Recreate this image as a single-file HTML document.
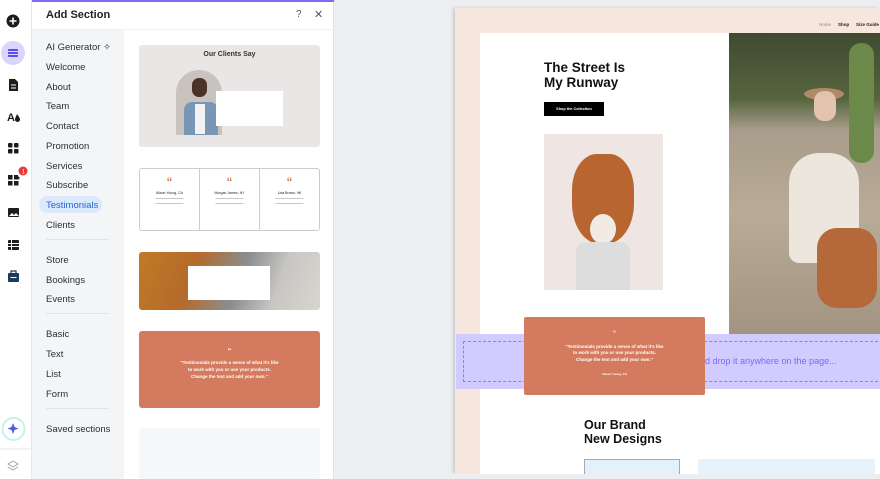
<!DOCTYPE html>
<html><head><meta charset="utf-8"><style>
*{box-sizing:border-box;margin:0;padding:0}
body{width:880px;height:479px;overflow:hidden;font-family:"Liberation Sans",sans-serif;background:#eceef1;position:relative}
.abs{position:absolute}
.rail{left:0;top:0;width:32px;height:479px;background:#fff;border-right:1px solid #e5e7eb}
.panel{left:32px;top:0;width:302px;height:479px;background:#fff;border-right:1px solid #dfe2e6}
.menu{left:32px;top:30px;width:92px;height:449px;background:#f4f5f7}
.mi{position:absolute;left:46px;font-size:9.5px;color:#2b2f36}
.sep{position:absolute;left:46px;width:63px;height:1px;background:#e1e3e7}
.card{position:absolute;left:139px;width:181px;border-radius:3px}
.col{flex:1;text-align:center;color:#d47a5e;font-size:12px;padding-top:6px;font-weight:bold}
.col i{display:block;font-style:normal;color:#222;font-size:3.5px;line-height:5px;font-weight:normal;margin-top:2px}
</style></head><body>
<div class="abs rail"></div>
<svg class="abs" style="left:0;top:0" width="32" height="479">
<circle cx="13" cy="21" r="6.5" fill="#1b1d21"/><path d="M13 17.5v7M9.5 21h7" stroke="#fff" stroke-width="1.6"/>
<circle cx="13" cy="53" r="12" fill="#d9d5fb"/><rect x="8" y="49" width="10" height="8" rx="1" fill="#5b4cf0"/><path d="M8 51.5h10M8 54.5h10" stroke="#d9d5fb" stroke-width="1"/>
<path d="M9 79h6l3 3v9H9z" fill="#1b1d21"/><path d="M11 85h5M11 88h5" stroke="#fff" stroke-width="1"/>
<text x="7" y="121" font-size="11" font-weight="bold" font-family="Liberation Sans" fill="#1b1d21">A</text><path d="M17 114c2 3 3 4 3 5.5a2.5 2.5 0 0 1-5 0c0-1.5 1-2.5 2-5.5z" fill="#1b1d21"/>
<rect x="8" y="143" width="4.5" height="4.5" rx="1" fill="#1b1d21"/><rect x="14" y="143" width="4.5" height="4.5" rx="1" fill="#1b1d21"/><rect x="8" y="149" width="4.5" height="4.5" rx="1" fill="#1b1d21"/><rect x="14" y="149" width="4.5" height="4.5" rx="1" fill="#1b1d21"/>
<rect x="8" y="175" width="4.5" height="4.5" fill="#1b1d21"/><rect x="8" y="181" width="4.5" height="4.5" fill="#1b1d21"/><rect x="14" y="181" width="4.5" height="4.5" fill="#1b1d21"/><path d="M14 175h4v1.5a1.5 1.5 0 0 1 0 3v0h-4z" fill="#1b1d21"/>
<circle cx="23" cy="171" r="4.5" fill="#e53935"/><text x="21.6" y="173.5" font-size="6" fill="#fff" font-family="Liberation Sans">1</text>
<rect x="8" y="208" width="11" height="9" rx="1" fill="#1b1d21"/><path d="M9 216l3-3 2 2 2-2 3 3z" fill="#fff"/>
<rect x="8" y="240" width="11" height="10" rx="1" fill="#1b1d21"/><path d="M8 243.5h11M8 246.5h11M11.5 240v10" stroke="#fff" stroke-width="1"/>
<rect x="8" y="273" width="11" height="9" rx="1" fill="#1b3a5c"/><path d="M11 273v-2h5v2" stroke="#1b3a5c" stroke-width="1.2" fill="none"/><path d="M10.5 277.5h6" stroke="#fff" stroke-width="1"/>
<circle cx="13.5" cy="429" r="11" fill="#fff" stroke="#c8f0ea" stroke-width="2"/><path d="M13 423l1.5 4 4 1.5-4 1.5-1.5 4-1.5-4-4-1.5 4-1.5z" fill="#4b5bf0"/>
<path d="M0 449h32" stroke="#e5e7eb"/>
<path d="M8 464l5-3 5 3-5 3zM8 467l5 3 5-3" stroke="#9aa0a8" stroke-width="0.9" fill="none"/>
</svg>

<div class="abs panel"></div>
<div class="abs" style="left:32px;top:0;width:302px;height:2px;background:#7b6cf6"></div>
<div class="abs" style="left:46px;top:9px;font-size:11px;font-weight:bold;color:#20232a">Add Section</div>
<div class="abs" style="left:296px;top:9px;font-size:10px;color:#555">?</div>
<div class="abs" style="left:314px;top:8px;font-size:11px;color:#555">✕</div>
<div class="abs" style="left:32px;top:29px;width:302px;height:1px;background:#eef0f2"></div>
<div class="abs menu"></div>
<div class="mi" style="top:42px">AI Generator ✧</div>
<div class="mi" style="top:62px">Welcome</div>
<div class="mi" style="top:82px">About</div>
<div class="mi" style="top:101px">Team</div>
<div class="mi" style="top:121px">Contact</div>
<div class="mi" style="top:141px">Promotion</div>
<div class="mi" style="top:161px">Services</div>
<div class="mi" style="top:180px">Subscribe</div>
<div class="abs" style="left:39px;top:196px;width:63px;height:17px;border-radius:9px;background:#dbe9fd"></div>
<div class="mi" style="top:200px;color:#2a63d9">Testimonials</div>
<div class="mi" style="top:220px">Clients</div>
<div class="sep" style="top:239px"></div>
<div class="mi" style="top:255px">Store</div>
<div class="mi" style="top:275px">Bookings</div>
<div class="mi" style="top:294px">Events</div>
<div class="sep" style="top:313px"></div>
<div class="mi" style="top:329px">Basic</div>
<div class="mi" style="top:349px">Text</div>
<div class="mi" style="top:369px">List</div>
<div class="mi" style="top:389px">Form</div>
<div class="sep" style="top:408px"></div>
<div class="mi" style="top:424px">Saved sections</div>

<div class="card" style="top:45px;height:102px;background:#e9e6e5">
  <div class="abs" style="left:0;width:181px;top:6px;text-align:center;font-size:7px;font-weight:bold;color:#333">Our Clients Say</div>
  <div class="abs" style="left:37px;top:25px;width:46px;height:65px;border-radius:23px 23px 0 0;background:#c9c3bf;overflow:hidden">
    <div class="abs" style="left:8px;top:32px;width:34px;height:40px;background:#7896b5;border-radius:8px 8px 0 0"></div>
    <div class="abs" style="left:19px;top:34px;width:10px;height:30px;background:#f2f2f2"></div>
    <div class="abs" style="left:16px;top:8px;width:15px;height:19px;background:#4a3226;border-radius:7px"></div>
  </div>
  <div class="abs" style="left:77px;top:46px;width:67px;height:35px;background:#fff"></div>
</div>
<div class="card" style="top:168px;height:63px;background:#fff;border:1px solid #ccc;display:flex">
  <div class="col" style="border-right:1px solid #ccc">“<i>Alison Young, CA<br>————————<br>————————</i></div>
  <div class="col" style="border-right:1px solid #ccc">“<i>Morgan James, NY<br>————————<br>————————</i></div>
  <div class="col">“<i>Lisa Brown, WI<br>————————<br>————————</i></div>
</div>
<div class="card" style="top:252px;height:58px;background:linear-gradient(110deg,#c07a25 0%,#b56a2a 30%,#8b8d8f 55%,#c8c6c2 75%,#d9d6d1 100%);overflow:hidden">
  <div class="abs" style="left:49px;top:14px;width:82px;height:34px;background:#fff"></div>
</div>
<div class="card" style="top:331px;height:77px;background:#d47a5e;color:#fff;text-align:center;font-size:4.5px;font-weight:bold;line-height:7px">
  <div style="padding-top:17px;font-size:7px">“</div>
  <div style="padding-top:4px">"Testimonials provide a sense of what it's like<br>to work with you or use your products.<br>Change the text and add your own."</div>
</div>
<div class="card" style="top:428px;height:51px;background:#f5f7f9"></div>

<div class="abs" style="left:455px;top:8px;width:425px;height:466px;background:#f6e6de;box-shadow:-2px 0 3px rgba(0,0,0,.15)"></div>
<div class="abs" style="left:819px;top:22px;font-size:4.5px;color:#888">Home</div>
<div class="abs" style="left:838px;top:22px;font-size:4.5px;font-weight:bold;color:#222">Shop</div>
<div class="abs" style="left:856px;top:22px;font-size:4.5px;font-weight:bold;color:#222">Size Guide</div>
<div class="abs" style="left:480px;top:33px;width:249px;height:441px;background:#fff"></div>
<div class="abs" style="left:480px;top:334px;width:400px;height:140px;background:#fff"></div>
<div class="abs" style="left:729px;top:33px;width:151px;height:301px;background:linear-gradient(180deg,#3f4a30 0%,#56653e 22%,#a89c8a 32%,#b8ab98 60%,#a29480 100%);overflow:hidden">
  <div class="abs" style="left:60px;top:120px;width:70px;height:110px;background:#ece6dc;border-radius:30px 30px 10px 10px"></div>
  <div class="abs" style="left:75px;top:55px;width:40px;height:12px;background:#b08a66;border-radius:50%"></div>
  <div class="abs" style="left:85px;top:58px;width:22px;height:30px;background:#e2c3ad;border-radius:10px"></div>
  <div class="abs" style="left:88px;top:195px;width:60px;height:80px;background:#b5683a;border-radius:20px"></div>
  <div class="abs" style="left:120px;top:10px;width:25px;height:120px;background:#6b8a4a;border-radius:12px"></div>
</div>
<div class="abs" style="left:544px;top:60px;font-size:13.5px;font-weight:bold;color:#111;line-height:15px">The Street Is<br>My Runway</div>
<div class="abs" style="left:544px;top:102px;width:60px;height:14px;background:#000;color:#fff;font-size:3.8px;font-weight:bold;text-align:center;line-height:14px">Shop the Collection</div>
<div class="abs" style="left:544px;top:134px;width:119px;height:156px;background:#efe6e3;overflow:hidden">
  <div class="abs" style="left:28px;top:20px;width:62px;height:90px;background:#b8652f;border-radius:40% 40% 45% 45%"></div>
  <div class="abs" style="left:46px;top:80px;width:26px;height:30px;background:#f2ebe5;border-radius:50%"></div>
  <div class="abs" style="left:32px;top:108px;width:54px;height:48px;background:#ddd;border-radius:10px 10px 0 0"></div>
</div>
<div class="abs" style="left:456px;top:334px;width:424px;height:55px;background:#d2cbff"></div>
<div class="abs" style="left:463px;top:341px;width:420px;height:41px;border:1px dashed #8f7cf5"></div>
<div class="abs" style="left:705px;top:356px;font-size:9px;color:#7b68f0">d drop it anywhere on the page...</div>
<div class="abs" style="left:524px;top:317px;width:181px;height:78px;background:#d47a5e;border-radius:2px;color:#fff;text-align:center;font-size:4.5px;font-weight:bold;line-height:6.5px">
  <div style="padding-top:14px;font-size:6px">“</div>
  <div style="padding-top:6px">"Testimonials provide a sense of what it's like<br>to work with you or use your products.<br>Change the text and add your own."</div>
  <div style="padding-top:8px;font-size:3px">Alison Young, CA</div>
</div>
<div class="abs" style="left:584px;top:418px;font-size:12.5px;font-weight:bold;color:#111;line-height:14px">Our Brand<br>New Designs</div>
<div class="abs" style="left:584px;top:459px;width:96px;height:16px;background:#e3f1fd;border:1px solid #aaa"></div>
<div class="abs" style="left:698px;top:459px;width:177px;height:16px;background:#e6f3fd"></div>
<div class="abs" style="left:334px;top:474px;width:546px;height:5px;background:#eceef1"></div>
</body></html>
